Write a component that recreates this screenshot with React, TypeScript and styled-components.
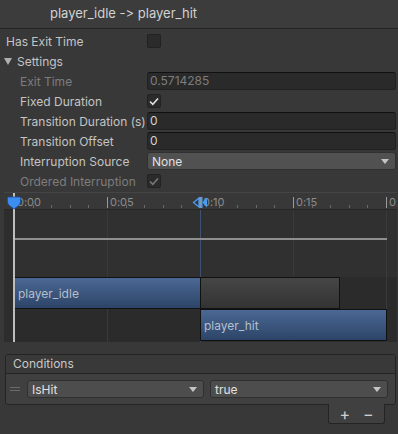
import React from 'react';
import styled, {createGlobalStyle} from 'styled-components';

const GlobalStyle = createGlobalStyle`
  html, body {
    margin: 0;
    padding: 0;
    background: #383838;
  }
  * {
    box-sizing: border-box;
  }
`;

const PX_PER_SEC = 18.6;
const ORIGIN = 10;
const t = (sec: number) => ORIGIN + sec * PX_PER_SEC;

const Panel = styled.div`
  width: 398px;
  height: 434px;
  overflow: hidden;
  background: #383838;
  font-family: Inter, 'Noto Sans', sans-serif;
  font-size: 12px;
  font-variant-ligatures: none;
  font-feature-settings: 'calt' 0, 'liga' 0;
  color: #c4c4c4;
`;

const Header = styled.div`
  height: 29px;
  padding-left: 50px;
  line-height: 27px;
  font-size: 13px;
  color: #d2d2d2;
  background: #3c3c3c;
  border-bottom: 1px solid #232323;
`;

const Form = styled.div`
  padding: 2px 2px 0 0;
`;

const Row = styled.div<{$indent?: number; $disabled?: boolean}>`
  display: grid;
  grid-template-columns: 147px 1fr;
  align-items: center;
  height: 20px;
  color: ${p => (p.$disabled ? '#7d7d7d' : '#c4c4c4')};

  & > label {
    padding-left: ${p => p.$indent ?? 6}px;
    white-space: nowrap;
  }
`;

const Foldout = styled.label`
  display: flex;
  align-items: center;
  gap: 5px;
  padding-left: 4px !important;

  &::before {
    content: '';
    width: 0;
    height: 0;
    border-left: 4px solid transparent;
    border-right: 4px solid transparent;
    border-top: 7px solid #b0b0b0;
  }
`;

const Checkbox = styled.div<{$checked?: boolean; $disabled?: boolean}>`
  width: 14px;
  height: 14px;
  border-radius: 2px;
  background: #2b2b2b;
  border: 1px solid #222;
  display: flex;
  align-items: center;
  justify-content: center;
  color: ${p => (p.$disabled ? '#777' : '#e0e0e0')};
`;

const Field = styled.div<{$disabled?: boolean}>`
  height: 18px;
  line-height: 16px;
  padding-left: 2px;
  border-radius: 3px;
  background: #2a2a2a;
  border: 1px solid #212121;
  border-top-color: #111;
  color: ${p => (p.$disabled ? '#7d7d7d' : '#d2d2d2')};
`;

const Dropdown = styled.div`
  height: 18px;
  display: flex;
  align-items: center;
  justify-content: space-between;
  padding: 0 6px 0 4px;
  border-radius: 3px;
  background: #515151;
  border: 1px solid #303030;
  color: #e0e0e0;

  &::after {
    content: '';
    width: 0;
    height: 0;
    border-left: 4px solid transparent;
    border-right: 4px solid transparent;
    border-top: 5px solid #c4c4c4;
  }
`;

const Timeline = styled.div`
  position: relative;
  margin: 1px 1px 0 4px;
  height: 150px;
  background: #2d2d2d;
  border-top: 1px solid #454545;
  overflow: hidden;
`;

const Ruler = styled.div`
  position: relative;
  height: 17px;
  background: #383838;
  border-bottom: 1px solid #262626;
`;

const Tick = styled.div<{$major?: boolean}>`
  position: absolute;
  bottom: 1px;
  width: 1px;
  height: ${p => (p.$major ? 11 : 3)}px;
  background: ${p => (p.$major ? '#9a9a9a' : '#6a6a6a')};
`;

const TickLabel = styled.span`
  position: absolute;
  top: 2px;
  font-size: 11px;
  color: #8c8c8c;
  white-space: nowrap;
`;

const Tracks = styled.div`
  position: relative;
  height: 132px;
  display: flex;
  flex-direction: column;
`;

const GridLine = styled.div<{$accent?: boolean}>`
  position: absolute;
  z-index: 1;
  top: 0;
  bottom: 0;
  width: 1px;
  background: ${p => (p.$accent ? '#3e5170' : '#3a3a3a')};
`;

const Upper = styled.div`
  position: relative;
  height: 67px;
  margin-left: 10px;
  background: #303030;
`;

const Curve = styled.div`
  position: absolute;
  z-index: 2;
  top: 28px;
  left: 0;
  width: 373px;
  height: 2px;
  background: #8f8f8f;
`;

const BarRow = styled.div`
  position: relative;
  height: 32px;
  margin-left: 10px;
  background: #2b2b2b;
`;

const Bar = styled.div<{$kind: 'blue' | 'gray'}>`
  position: absolute;
  z-index: 2;
  top: 0;
  height: 32px;
  padding-left: 3px;
  line-height: 31px;
  font-size: 12px;
  color: #b4bfcc;
  border: 1px solid #111;
  background: ${p =>
    p.$kind === 'blue'
      ? 'linear-gradient(#4b6894, #2c4467)'
      : 'linear-gradient(#464646, #333333)'};
`;

const Playhead = styled.div`
  position: absolute;
  z-index: 3;
  left: 9px;
  top: 0;
  bottom: 0;
  width: 2px;
  background: #bdbdbd;
`;

const Marker = styled.svg`
  position: absolute;
  z-index: 4;
  top: 3px;
`;

const Conditions = styled.div`
  margin: 12px 2px 0 5px;
  border: 1px solid #242424;
  border-radius: 3px;
  background: #404040;
`;

const CondHeader = styled.div`
  height: 19px;
  line-height: 18px;
  padding-left: 7px;
  font-size: 12px;
  color: #c8c8c8;
  background: #393939;
  border-bottom: 1px solid #242424;
  border-radius: 3px 3px 0 0;
`;

const CondRow = styled.div`
  display: grid;
  grid-template-columns: 11px 177px 178px;
  gap: 6px;
  align-items: center;
  padding: 6px 0 6px 4px;

  & > ${Dropdown} {
    background: #4d4d4d;
  }
`;

const Handle = styled.div`
  width: 10px;
  height: 4px;
  border-top: 1px solid #6a6a6a;
  border-bottom: 1px solid #6a6a6a;
`;

const Footer = styled.div`
  display: flex;
  justify-content: flex-end;
  padding-right: 13px;
`;

const FooterBox = styled.div`
  width: 57px;
  height: 20px;
  margin-top: -1px;
  display: flex;
  align-items: center;
  justify-content: space-around;
  padding: 0 4px;
  background: #404040;
  border: 1px solid #242424;
  border-top: none;
  border-radius: 0 0 3px 3px;
  color: #d0d0d0;
  font-size: 16px;
`;

const Check = () => (
  <svg width="10" height="9" viewBox="0 0 10 9">
    <path d="M1 4.5 L3.8 7.3 L9 1.5" fill="none" stroke="currentColor" strokeWidth="1.6" />
  </svg>
);

const majors = [0, 5, 10, 15, 20];
const minors: number[] = [];
for (let s = 0; s < 21; s++) if (s % 5 !== 0) minors.push(s);

export default function App() {
  return (
    <>
      <GlobalStyle />
      <Panel>
        <Header>player_idle -&gt; player_hit</Header>
        <Form>
          <Row>
            <label>Has Exit Time</label>
            <Checkbox />
          </Row>
          <Row>
            <Foldout>Settings</Foldout>
          </Row>
          <Row $indent={20} $disabled>
            <label>Exit Time</label>
            <Field $disabled>0.5714285</Field>
          </Row>
          <Row $indent={20}>
            <label>Fixed Duration</label>
            <Checkbox $checked>
              <Check />
            </Checkbox>
          </Row>
          <Row $indent={20}>
            <label>Transition Duration (s)</label>
            <Field>0</Field>
          </Row>
          <Row $indent={20}>
            <label>Transition Offset</label>
            <Field>0</Field>
          </Row>
          <Row $indent={20}>
            <label>Interruption Source</label>
            <Dropdown>None</Dropdown>
          </Row>
          <Row $indent={20} $disabled>
            <label>Ordered Interruption</label>
            <Checkbox $checked $disabled>
              <Check />
            </Checkbox>
          </Row>
        </Form>

        <Timeline>
          <Ruler>
            {majors.map(s => (
              <React.Fragment key={s}>
                <Tick $major style={{left: t(s)}} />
                <TickLabel style={{left: t(s) + 3}}>{s === 20 ? '0:' : `0:${String(s).padStart(2, '0')}`}</TickLabel>
              </React.Fragment>
            ))}
            {minors.map(s => (
              <Tick key={s} style={{left: t(s)}} />
            ))}
          </Ruler>
          <Tracks>
            <Upper>
              <Curve />
            </Upper>
            <BarRow>
              <Bar $kind="blue" style={{left: 0, width: 187}}>player_idle</Bar>
              <Bar $kind="gray" style={{left: 186, width: 140}} />
            </BarRow>
            <BarRow>
              <Bar $kind="blue" style={{left: 186, width: 187}}>player_hit</Bar>
            </BarRow>
            {[5, 15, 20].map(s => (
              <GridLine key={s} style={{left: t(s)}} />
            ))}
            <GridLine $accent style={{left: t(10)}} />
          </Tracks>
          <Playhead />
          <Marker width="14" height="14" viewBox="0 0 14 14" style={{left: 3}}>
            <path d="M1.5 1 H12.5 Q13.5 1 13.5 2 V6 Q13.5 8 11 10 L7 13 L3 10 Q0.5 8 0.5 6 V2 Q0.5 1 1.5 1 Z" fill="#3b8ef0" stroke="#1c4f9a" strokeWidth="0.8" />
          </Marker>
          <Marker width="16" height="13" viewBox="0 0 16 13" style={{left: 188}}>
            <path d="M7 2 L1.5 6.5 L7 11 Z" fill="none" stroke="#4a9cf0" strokeWidth="1.3" />
            <rect x="7" y="1" width="1.5" height="11" fill="#4a9cf0" />
            <rect x="9" y="1" width="1.5" height="11" fill="#4a9cf0" />
            <path d="M15 1.5 L10.5 6.5 L15 11.5 Z" fill="#4a9cf0" />
          </Marker>
        </Timeline>

        <Conditions>
          <CondHeader>Conditions</CondHeader>
          <CondRow>
            <Handle />
            <Dropdown>IsHit</Dropdown>
            <Dropdown>true</Dropdown>
          </CondRow>
        </Conditions>
        <Footer>
          <FooterBox>
            <span>+</span>
            <span>−</span>
          </FooterBox>
        </Footer>
      </Panel>
    </>
  );
}
